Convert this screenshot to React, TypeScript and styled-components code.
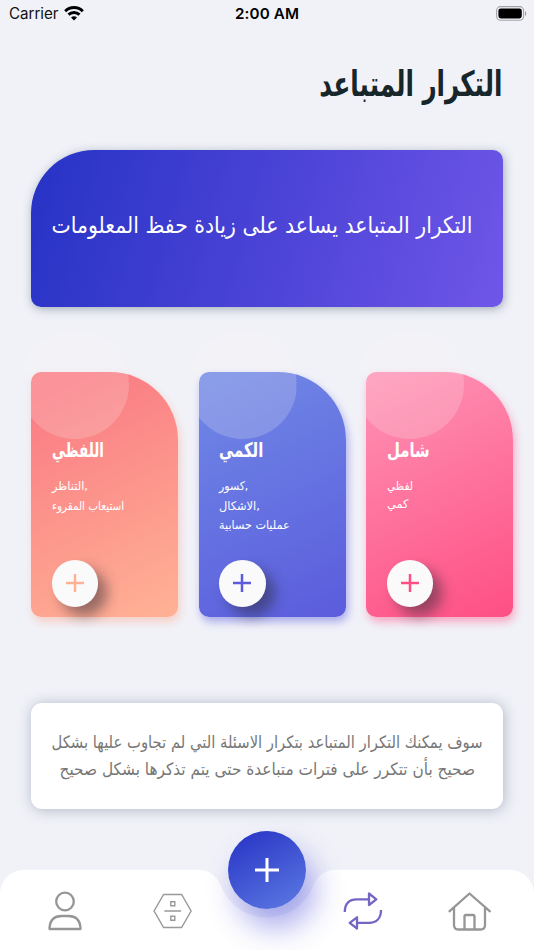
import React from "react";
import styled, { createGlobalStyle } from "styled-components";

const Global = createGlobalStyle`
  * { box-sizing: border-box; }
  body { margin: 0; background: #f1f2f8; }
`;

const Screen = styled.div`
  width: 534px;
  height: 950px;
  overflow: hidden;
  background: #f1f2f8;
  display: flex;
  flex-direction: column;
  font-family: "DejaVu Sans", sans-serif;
`;

const StatusBar = styled.header`
  height: 28px;
  padding: 0 7px 0 9px;
  display: grid;
  grid-template-columns: 1fr auto 1fr;
  align-items: center;
  font: 400 15.2px/28px Inter, sans-serif;
  letter-spacing: -0.05px;
  color: #111;
`;
const Carrier = styled.div`
  display: flex;
  align-items: center;
  gap: 6px;
  svg { margin-top: -1px; }
`;
const Clock = styled.div`
  font-weight: 600;
  letter-spacing: 0.12px;
  margin-right: 2px;
  color: #000;
`;
const BatterySlot = styled.div`
  display: flex;
  justify-content: flex-end;
  margin-top: -2px;
`;

const Line = styled.span<{ $sx?: number; $origin?: string }>`
  display: block;
  width: max-content;
  flex: none;
  white-space: nowrap;
  transform: scaleX(${(p) => p.$sx ?? 1});
  transform-origin: ${(p) => p.$origin ?? "left"} center;
`;

const Title = styled.h1`
  margin: 36px 31.5px 0;
  height: 40px;
  display: flex;
  justify-content: flex-end;
  font-size: 35px;
  line-height: 40px;
  font-weight: 700;
  color: #17262a;
`;

const Hero = styled.section`
  margin: 46px 31px 0;
  height: 157px;
  flex: none;
  border-radius: 63px 10px 10px 10px;
  background: linear-gradient(105deg, #2633c5 0%, #4a43d6 50%, #6f56e8 100%);
  box-shadow: 1px 2px 10px rgba(80, 100, 120, 0.5);
  padding: 0 31px 8px 20px;
  display: flex;
  align-items: center;
  justify-content: flex-end;
  color: #fff;
  font-size: 23px;
  line-height: 30px;
`;

const Cards = styled.section`
  margin: 65px 0 0 31px;
  display: flex;
  gap: 20.5px;
`;
const Card = styled.article<{ $bg: string; $glow: string }>`
  position: relative;
  flex: none;
  width: 147px;
  height: 245px;
  border-radius: 10px 68px 10px 10px;
  background: ${(p) => p.$bg};
  box-shadow: 2px 5px 9px ${(p) => p.$glow};
  padding: 63px 0 10.5px 20.5px;
  display: flex;
  flex-direction: column;
  color: #fff;
`;
const Bubble = styled.i`
  position: absolute;
  left: -11px;
  top: -42px;
  width: 109px;
  height: 109px;
  border-radius: 50%;
  background: rgba(250, 245, 247, 0.2);
  clip-path: inset(42px 0 0 11px);
`;
const Halo = styled(Bubble)`
  background: rgba(250, 240, 242, 0.22);
  clip-path: inset(0 0 67px 0);
`;
const CardTitle = styled.h2`
  margin: 0;
  font-size: 20px;
  line-height: 30px;
  font-weight: 700;
`;
const CardText = styled.div<{ $lh: number }>`
  margin-top: 12px;
  flex: 1;
  font-size: 12px;
  line-height: ${(p) => p.$lh}px;
`;
const AddButton = styled.button<{ $tint: string }>`
  flex: none;
  width: 46.5px;
  height: 46.5px;
  padding: 0;
  border: 0;
  border-radius: 50%;
  background: #fafafa;
  color: ${(p) => p.$tint};
  box-shadow: 9px 9px 13px rgba(40, 40, 50, 0.48);
  display: grid;
  place-items: center;
`;

const Note = styled.section`
  margin: 86px 31px 0;
  height: 106px;
  flex: none;
  border-radius: 11px;
  background: #fff;
  box-shadow: 1px 1px 14px rgba(100, 115, 140, 0.48);
  display: flex;
  flex-direction: column;
  align-items: center;
  justify-content: center;
  font-size: 17px;
  line-height: 27px;
  color: #777;
`;

const TabBar = styled.nav`
  position: relative;
  margin-top: auto;
  height: 81px;
  flex: none;
`;
const TabShape = styled.svg`
  position: absolute;
  inset: 0;
`;
const Tabs = styled.div`
  position: relative;
  height: 81px;
  padding: 20px 42px 0 46px;
  display: flex;
  justify-content: space-between;
`;
const Tab = styled.button`
  width: 44px;
  height: 44px;
  padding: 0;
  border: 0;
  background: none;
  svg { display: block; }
`;
const FabSpace = styled.div`
  width: 22px;
`;
const Fab = styled.button`
  position: absolute;
  left: 228px;
  top: -38px;
  width: 78px;
  height: 78px;
  padding: 0;
  border: 0;
  border-radius: 50%;
  color: #fff;
  background: linear-gradient(150deg, #2935c6 5%, #5d7be3 100%);
  box-shadow: 9px 19px 30px rgba(55, 55, 215, 0.42);
  display: grid;
  place-items: center;
`;

const Plus = ({ size, stroke }: { size: number; stroke: number }) => (
  <svg width={size} height={size} viewBox={`0 0 ${size} ${size}`} stroke="currentColor" strokeWidth={stroke}>
    <path d={`M${size / 2} 0V${size}M0 ${size / 2}H${size}`} />
  </svg>
);

type TextLine = { text: string; sx?: number };
const cards: {
  title: TextLine; lines: TextLine[]; lh: number; bg: string; glow: string; tint: string;
}[] = [
  {
    title: { text: "اللفظي", sx: 0.678 },
    lines: [{ text: "التناظر,", sx: 0.95 }, { text: "استيعاب المقروء", sx: 0.867 }],
    lh: 19.5,
    bg: "linear-gradient(155deg, #fa7c84 10%, #ffb295 100%)",
    glow: "rgba(255,160,130,.42)",
    tint: "#ffb295",
  },
  {
    title: { text: "الكمي", sx: 0.742 },
    lines: [{ text: "كسور,", sx: 0.91 }, { text: "الاشكال,", sx: 0.95 }, { text: "عمليات حسابية", sx: 0.933 }],
    lh: 19.5,
    bg: "linear-gradient(155deg, #6f87e6 5%, #5b5cdc 100%)",
    glow: "rgba(92,94,221,.48)",
    tint: "#5b5cdc",
  },
  {
    title: { text: "شامل", sx: 0.744 },
    lines: [{ text: "لفظي", sx: 0.88 }, { text: "كمي", sx: 0.95 }],
    lh: 18,
    bg: "linear-gradient(155deg, #fe94b6 0%, #fe4f84 100%)",
    glow: "rgba(254,80,133,.45)",
    tint: "#fe4f84",
  },
];

export default function App() {
  return (
    <Screen>
      <Global />
      <StatusBar>
        <Carrier>
          Carrier
          <svg width="20" height="15" viewBox="0 0 20 15" fill="none" stroke="#000" strokeWidth="3">
            <path d="M1.2 5.2a12.6 12.6 0 0 1 17.6 0" />
            <path d="M4.5 8.7a7.9 7.9 0 0 1 11 0" />
            <path d="M10 14.5 7 11.6a4.4 4.4 0 0 1 6 0Z" fill="#000" stroke="none" />
          </svg>
        </Carrier>
        <Clock>2:00 AM</Clock>
        <BatterySlot>
          <svg width="31" height="15" viewBox="0 0 31 15">
            <rect x=".6" y=".6" width="27" height="13.6" rx="4" fill="none" stroke="#a2a3a8" strokeWidth="1.1" />
            <rect x="2.4" y="2.4" width="23.4" height="10" rx="2.4" fill="#000" />
            <path d="M29 5a3 3 0 0 1 0 5Z" fill="#a2a3a8" />
          </svg>
        </BatterySlot>
      </StatusBar>

      <Title>
        <Line dir="rtl" $sx={0.703} $origin="right">التكرار المتباعد</Line>
      </Title>

      <Hero>
        <Line dir="rtl" $sx={0.889} $origin="right">التكرار المتباعد يساعد على زيادة حفظ المعلومات</Line>
      </Hero>

      <Cards>
        {cards.map((c) => (
          <Card key={c.title.text} $bg={c.bg} $glow={c.glow}>
            <Bubble />
            <Halo />
            <CardTitle>
              <Line $sx={c.title.sx}>{c.title.text}</Line>
            </CardTitle>
            <CardText $lh={c.lh}>
              {c.lines.map((l) => (
                <Line key={l.text} $sx={l.sx}>{l.text}</Line>
              ))}
            </CardText>
            <AddButton $tint={c.tint}>
              <Plus size={18} stroke={2.5} />
            </AddButton>
          </Card>
        ))}
      </Cards>

      <Note>
        <Line dir="rtl" $sx={0.869} $origin="center">سوف يمكنك التكرار المتباعد بتكرار الاسئلة التي لم تجاوب عليها بشكل</Line>
        <Line dir="rtl" $sx={0.902} $origin="center">صحيح بأن تتكرر على فترات متباعدة حتى يتم تذكرها بشكل صحيح</Line>
      </Note>

      <TabBar>
        <TabShape width="534" height="81" viewBox="0 0 534 81">
          <path
            fill="#fff"
            d="M0 24.5A24.5 24 0 0 1 24.5 .8H198C209 .8 216.500 7 220.500 16A49.500 49.500 0 0 0 313.500 16C317.500 7 325 .8 336 .8H509.500A24.500 24 0 0 1 534 24.500V81H0Z"
          />
        </TabShape>
        <Fab><Plus size={24} stroke={3} /></Fab>
        <Tabs>
          <Tab>
            <svg width="44" height="44" viewBox="0 0 44 44" fill="none" stroke="#969696" strokeWidth="2.3">
              <circle cx="19" cy="12.500" r="8.800" />
              <path d="M3.500 40V38.500Q4.500 27 15.500 27H22.500Q33.500 27 34.500 38.500V40Z" strokeLinejoin="round" />
            </svg>
          </Tab>
          <Tab>
            <svg width="44" height="44" viewBox="1.4 0 44 44" fill="none" stroke="#999" strokeWidth="1.4">
              <path d="M13 5.500H31L40.500 22 31 38.500H13L3.500 22ZM13.800 22H30.500M20.200 12.800H24.200V16.800H20.200ZM20.200 27.300H24.200V31.300H20.200Z" />
            </svg>
          </Tab>
          <FabSpace />
          <Tab>
            <svg width="44" height="44" viewBox="2 0 44 44" fill="none" stroke="#7566c4" strokeWidth="2.3" strokeLinejoin="round">
              <path d="M4.800 23C4.800 15 9 10.300 17 10.300H29M29 4.500V16L36.300 10.300ZM41 21C41 29 36.500 33.900 29 33.900H17M17 28.300V39.500L9.700 33.900Z" />
            </svg>
          </Tab>
          <Tab>
            <svg width="44" height="44" viewBox="0 0 44 44" fill="none" stroke="#969696" strokeWidth="2.3" strokeLinejoin="round">
              <path d="M.800 22.800 21.500 4.500 42.500 22.800M6 18.500V36Q6 40.500 10.500 40.500H32.500Q37 40.500 37 36V18.500M16.500 40V27.500Q16.500 26 18 26H25Q26.500 26 26.500 27.500V40" />
            </svg>
          </Tab>
        </Tabs>
      </TabBar>
    </Screen>
  );
}
